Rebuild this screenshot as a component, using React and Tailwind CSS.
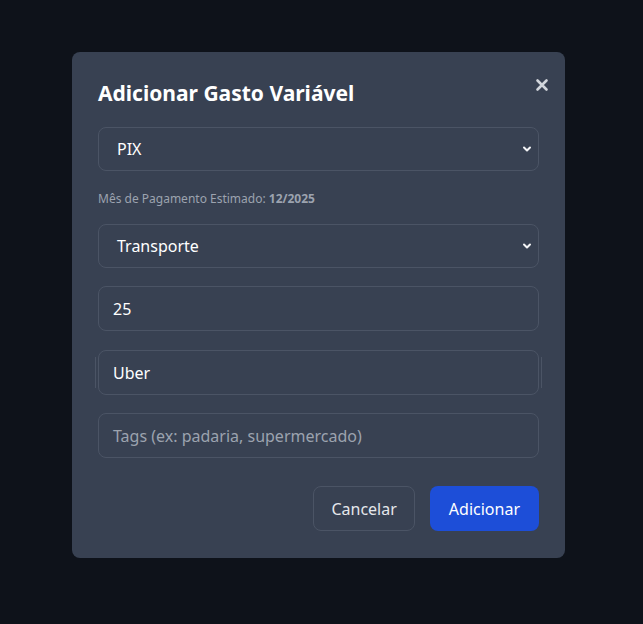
import React from "react";

const Chevron = () => (
  <svg className="pointer-events-none absolute right-[7px] top-1/2 -translate-y-1/2" width="10" height="10" viewBox="0 0 10 10" fill="none">
    <path d="M2 3.5 L5 6.5 L8 3.5" stroke="#f3f4f6" strokeWidth="2" strokeLinecap="round" strokeLinejoin="round" />
  </svg>
);

export default function App() {
  const font = { fontFamily: '"Noto Sans", "Open Sans", sans-serif' };
  return (
    <div className="w-[643px] h-[624px] bg-[#0e121a] flex items-start justify-start pl-[72px] pt-[52px]" style={font}>
      <div className="relative w-[493px] bg-[#384152] rounded-lg px-[26px] pt-[78px] pb-[27px]">
        <h2 className="absolute left-[26px] top-[27px] text-[21px] leading-[28px] font-bold text-white">
          Adicionar Gasto Variável
        </h2>
        <button className="absolute right-[15px] top-[25px] w-[16px] h-[16px] flex items-center justify-center text-gray-300">
          <svg width="14" height="14" viewBox="0 0 14 14">
            <path d="M2.5 2.5 L11.5 11.5 M11.5 2.5 L2.5 11.5" stroke="#d1d5db" strokeWidth="2.6" strokeLinecap="round" />
          </svg>
        </button>

        <div className="flex flex-col">
          <div className="relative -mt-[3px]">
            <div className="h-[44px] rounded-lg border border-[#4b5465] flex items-center pl-[18px] text-[16px] text-white">PIX</div>
            <Chevron />
          </div>
          <p className="mt-[20px] text-[12px] leading-[16px] text-[#9ca3af]">
            Mês de Pagamento Estimado: <span className="font-bold">12/2025</span>
          </p>
          <div className="relative mt-[17px]">
            <div className="h-[44px] rounded-lg border border-[#4b5465] flex items-center pl-[18px] text-[16px] text-white">Transporte</div>
            <Chevron />
          </div>
          <div className="mt-[18px] h-[45px] rounded-lg border border-[#4b5465] flex items-center pl-[14px] text-[16px] text-white">25</div>
          <div className="relative mt-[19px]">
            <div className="h-[45px] rounded-lg border border-[#4b5465] flex items-center pl-[14px] text-[16px] text-white">Uber</div>
            <div className="absolute -left-[3px] top-[7px] bottom-[7px] w-px bg-[#4b5465]" />
            <div className="absolute -right-[3px] top-[7px] bottom-[7px] w-px bg-[#4b5465]" />
          </div>
          <div className="mt-[18px] h-[45px] rounded-lg border border-[#4b5465] flex items-center pl-[14px] text-[16px] text-[#9ca3af]">
            Tags (ex: padaria, supermercado)
          </div>
          <div className="mt-[28px] flex justify-end gap-[15px]">
            <button className="h-[45px] px-[17px] rounded-lg border border-[#4b5465] text-[16px] text-[#e5e7eb]">Cancelar</button>
            <button className="h-[45px] px-[19px] rounded-lg bg-[#1d4ed8] text-[16px] text-white">Adicionar</button>
          </div>
        </div>
      </div>
    </div>
  );
}
